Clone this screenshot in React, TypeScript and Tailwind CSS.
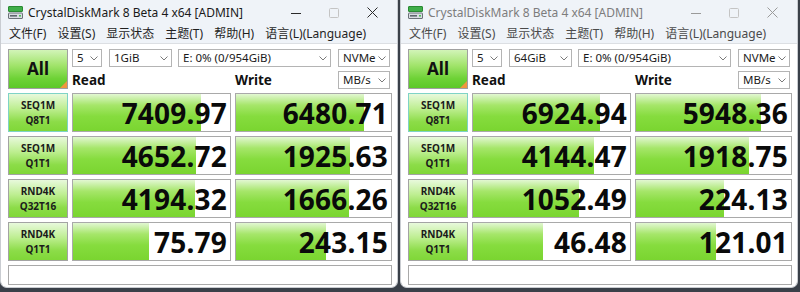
import React from "react";

interface Result {
    label: [string, string];
    read: string;
    readFill: number;
    write: string;
    writeFill: number;
}

interface WindowProps {
    active: boolean;
    size: string;
    results: Result[];
}

const font = "font-['Noto_Sans','Noto_Sans_CJK_SC',sans-serif]";

const menuItems = ["文件(F)", "设置(S)", "显示状态", "主题(T)", "帮助(H)", "语言(L)(Language)"];

function DriveIcon() {
    return (
        <svg width="15" height="13" viewBox="0 0 15 13">
            <rect x="0.5" y="0.5" width="14" height="5" rx="0.5" fill="#3fae49" stroke="#2a8a33" />
            <rect x="0.5" y="7" width="14" height="5.5" rx="0.5" fill="#d9dde2" stroke="#6b7178" />
            <rect x="2" y="9" width="7" height="1.6" fill="#5f666e" />
            <rect x="11" y="9" width="2" height="1.6" fill="#4fc15a" />
        </svg>
    );
}

function Chevron() {
    return (
        <svg width="8" height="5" viewBox="0 0 8 5" className="shrink-0">
            <path d="M0.5 0.5 L4 4 L7.5 0.5" fill="none" stroke="#7a7a7a" strokeWidth="1" />
        </svg>
    );
}

function Select({ text, width }: { text: string; width: string }) {
    return (
        <div className={`${width} h-[18px] shrink-0 flex items-center justify-between border border-[#b4b4b4] bg-white pl-[4px] pr-[3px] text-[11.5px] leading-none text-[#1a1a1a]`}>
            <span>{text}</span>
            <Chevron />
        </div>
    );
}

function LabelCell({ lines, focused }: { lines: [string, string]; focused: boolean }) {
    return (
        <div
            className={`h-[39px] flex flex-col items-center justify-center border ${focused ? "border-[#7fd3c6]" : "border-[#a3a3a3]"} bg-[linear-gradient(to_bottom,#e8f9dc_0%,#bdee90_40%,#8cdc48_75%,#80d738_100%)] text-[10px] font-bold leading-[15px] text-[#1b1b1b]`}
        >
            <span>{lines[0]}</span>
            <span>{lines[1]}</span>
        </div>
    );
}

function ResultCell({ value, fill }: { value: string; fill: number }) {
    return (
        <div className="relative h-[39px] overflow-hidden border border-[#a9a9a9] bg-white">
            <div
                className="absolute inset-y-0 left-0 bg-[linear-gradient(to_bottom,#e2f7d2_0%,#a6e66a_30%,#86dc3e_60%,#7ad530_100%)]"
                style={{ width: fill }}
            />
            <div className="relative flex h-full items-center justify-end pr-[3px] text-[28px] font-bold leading-none tracking-[0.2px] text-[#0a0a0a]">
                {value}
            </div>
        </div>
    );
}

function BenchWindow({ active, size, results }: WindowProps) {
    const titleColor = active ? "text-[#1a1a1a]" : "text-[#7d7d7d]";
    const menuColor = active ? "text-[#1f1f1f]" : "text-[#4a4a4a]";
    const ctrlColor = active ? "#2a2a2a" : "#9a9a9a";

    return (
        <div className={`flex h-[288px] flex-col overflow-hidden rounded-b-[7px] border-x border-b border-[#c9ccd1] bg-white ${font}`}>
            {/* title bar */}
            <div className="flex h-[25px] shrink-0 items-center bg-[#eff3f8] pl-[7px]">
                <DriveIcon />
                <span className={`ml-[5px] text-[12px] ${titleColor}`}>CrystalDiskMark 8 Beta 4 x64 [ADMIN]</span>
                <div className="ml-auto flex h-full items-center">
                    <div className="flex w-[38px] justify-center">
                        <svg width="10" height="10" viewBox="0 0 10 10">
                            <path d="M0 5.5 H10" stroke={ctrlColor} strokeWidth="1" />
                        </svg>
                    </div>
                    <div className="flex w-[38px] justify-center">
                        <svg width="10" height="10" viewBox="0 0 10 10">
                            <rect x="0.5" y="0.5" width="9" height="9" rx="1" fill="none" stroke="#c4c4c4" />
                        </svg>
                    </div>
                    <div className="flex w-[44px] justify-center pr-[6px]">
                        <svg width="11" height="11" viewBox="0 0 11 11">
                            <path d="M0.5 0.5 L10.5 10.5 M10.5 0.5 L0.5 10.5" stroke={ctrlColor} strokeWidth="1" />
                        </svg>
                    </div>
                </div>
            </div>

            {/* menu bar */}
            <div className={`flex h-[18px] shrink-0 items-center gap-[11px] bg-[#eff3f8] pl-[8px] text-[12px] leading-none ${menuColor}`}>
                {menuItems.map(item => (
                    <span key={item}>{item}</span>
                ))}
            </div>
            <div className="h-px shrink-0 bg-[#dcdfe3]" />

            {/* content */}
            <div className="flex flex-col gap-[4px] pl-[7px] pr-[6px] pt-[5px]">
                <div className="flex gap-[4px]">
                    <div className="relative flex h-[40px] w-[60px] shrink-0 items-center justify-center border border-[#a0a0a0] bg-[linear-gradient(to_bottom,#d2f4b8_0%,#a2e46c_40%,#6ed236_75%,#5cc828_100%)] text-[17px] font-bold text-[#111]">
                        All
                        <div className="absolute bottom-0 right-0 h-0 w-0 border-b-[7px] border-l-[7px] border-b-[#f0963c] border-l-transparent" />
                    </div>
                    <div className="flex flex-col gap-[4px]">
                        <div className="flex">
                            <Select text="5" width="w-[30px]" />
                            <div className="w-[7px] shrink-0" />
                            <Select text={size} width="w-[63px]" />
                            <div className="w-[6px] shrink-0" />
                            <Select text="E: 0% (0/954GiB)" width="w-[153px]" />
                            <div className="w-[7px] shrink-0" />
                            <Select text="NVMe" width="w-[52px]" />
                        </div>
                        <div className="flex items-end">
                            <span className="w-[163px] shrink-0 text-[13.5px] font-bold leading-[18px] text-[#111]">Read</span>
                            <span className="w-[103px] shrink-0 text-[13.5px] font-bold leading-[18px] text-[#111]">Write</span>
                            <Select text="MB/s" width="w-[52px]" />
                        </div>
                    </div>
                </div>

                <div className="grid grid-cols-[60px_159px_157px] gap-x-[4px] gap-y-[4px]">
                    {results.map((r, i) => (
                        <React.Fragment key={i}>
                            <LabelCell lines={r.label} focused={i === 0} />
                            <ResultCell value={r.read} fill={r.readFill} />
                            <ResultCell value={r.write} fill={r.writeFill} />
                        </React.Fragment>
                    ))}
                </div>

                <div className="h-[20px] w-[384px] border border-[#a9a9a9] bg-white" />
            </div>
        </div>
    );
}

const left: Result[] = [
    { label: ["SEQ1M", "Q8T1"], read: "7409.97", readFill: 128, write: "6480.71", writeFill: 128 },
    { label: ["SEQ1M", "Q1T1"], read: "4652.72", readFill: 123, write: "1925.63", writeFill: 114 },
    { label: ["RND4K", "Q32T16"], read: "4194.32", readFill: 122, write: "1666.26", writeFill: 113 },
    { label: ["RND4K", "Q1T1"], read: "75.79", readFill: 76, write: "243.15", writeFill: 90 },
];

const right: Result[] = [
    { label: ["SEQ1M", "Q8T1"], read: "6924.94", readFill: 127, write: "5948.36", writeFill: 125 },
    { label: ["SEQ1M", "Q1T1"], read: "4144.47", readFill: 121, write: "1918.75", writeFill: 113 },
    { label: ["RND4K", "Q32T16"], read: "1052.49", readFill: 106, write: "224.13", writeFill: 88 },
    { label: ["RND4K", "Q1T1"], read: "46.48", readFill: 70, write: "121.01", writeFill: 80 },
];

export default function App() {
    return (
        <div className="flex h-[292px] w-[800px] gap-[2px] overflow-hidden bg-[#3a4049]">
            <div className="w-[398px] shrink-0">
                <BenchWindow active size="1GiB" results={left} />
            </div>
            <div className="w-[398px] shrink-0">
                <BenchWindow active={false} size="64GiB" results={right} />
            </div>
        </div>
    );
}
